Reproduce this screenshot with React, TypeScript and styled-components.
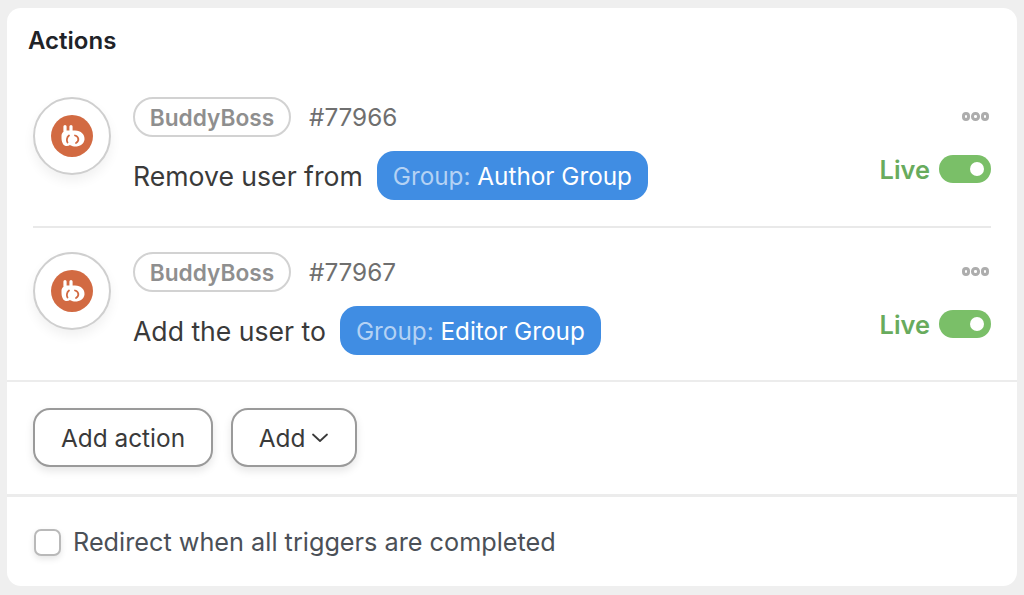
import styled, { createGlobalStyle } from "styled-components";

const GlobalStyle = createGlobalStyle`
  html, body {
    margin: 0;
    padding: 0;
    background: #efefef;
  }
  body {
    font-family: Inter, "Noto Sans", sans-serif;
    -webkit-font-smoothing: antialiased;
  }
`;

const Page = styled.div`
  width: 1024px;
  height: 595px;
  overflow: hidden;
  padding: 8px 7px 9px;
  box-sizing: border-box;
`;

const Card = styled.section`
  background: #fff;
  border-radius: 14px;
  height: 578px;
  overflow: hidden;
  display: flex;
  flex-direction: column;
`;

const Title = styled.h2`
  margin: 0;
  padding: 18px 21px 0;
  height: 72px;
  box-sizing: border-box;
  font-size: 24px;
  line-height: 30px;
  font-weight: 600;
  color: #1f2328;
`;

const ActionList = styled.div`
  padding: 17px 26px 0;
  height: 302px;
  box-sizing: border-box;
  border-bottom: 2px solid #ececec;
`;

const ActionRow = styled.div`
  display: flex;
  height: 129px;
  position: relative;
  &:first-child {
    border-bottom: 2px solid #e9e9e9;
    margin-bottom: 24px;
  }
`;

const IconCircle = styled.div`
  width: 78px;
  height: 78px;
  box-sizing: border-box;
  border-radius: 50%;
  background: #fff;
  border: 2px solid #cfcfcf;
  box-shadow: 0 6px 12px rgba(0, 0, 0, 0.06);
  display: flex;
  align-items: center;
  justify-content: center;
  flex: none;
`;

const ActionBody = styled.div`
  margin-left: 22px;
  flex: 1;
  display: flex;
  flex-direction: column;
`;

const MetaLine = styled.div`
  display: flex;
  align-items: center;
  height: 40px;
`;

const IntegrationPill = styled.span`
  height: 40px;
  width: 158px;
  box-sizing: border-box;
  border: 2px solid #d2d2d2;
  border-radius: 20px;
  display: flex;
  align-items: center;
  justify-content: center;
  font-size: 22.7px;
  font-weight: 600;
  color: #8f8f8f;
`;

const ActionId = styled.span`
  margin-left: 18px;
  font-size: 24.3px;
  color: #6f6f6f;
`;

const Sentence = styled.div`
  display: flex;
  align-items: center;
  margin-top: 14px;
  height: 49px;
  font-size: 26.6px;
  color: #3a3a3a;
`;

const Token = styled.span`
  margin-left: 14px;
  height: 49px;
  padding: 0 16px;
  border-radius: 17px;
  background: #408de3;
  color: #fff;
  display: flex;
  align-items: center;
  font-size: 24.3px;
  white-space: pre;
`;

const TokenLabel = styled.span`
  color: #b4d2f4;
`;

const Side = styled.div`
  position: absolute;
  right: 0;
  top: 0;
  display: flex;
  flex-direction: column;
  align-items: flex-end;
`;

const Dots = styled.div`
  display: flex;
  gap: 1px;
  margin: 15px 2px 33px 0;
`;

const Dot = styled.span`
  width: 8.5px;
  height: 8.5px;
  box-sizing: border-box;
  border: 3px solid #adadad;
  border-radius: 50%;
`;

const LiveLine = styled.div`
  display: flex;
  align-items: center;
  gap: 9px;
`;

const LiveLabel = styled.span`
  font-size: 25.4px;
  font-weight: 600;
  color: #68ab5d;
  line-height: 28px;
  padding-top: 2px;
`;

const Toggle = styled.span`
  width: 52px;
  height: 28px;
  border-radius: 14px;
  background: #7abf68;
  display: flex;
  align-items: center;
  justify-content: flex-end;
  padding-right: 7px;
  box-sizing: border-box;
`;

const Knob = styled.span`
  width: 14px;
  height: 14px;
  border-radius: 50%;
  background: #fff;
`;

const ButtonBar = styled.div`
  display: flex;
  gap: 18px;
  padding: 26px 26px 0;
  height: 115px;
  box-sizing: border-box;
  border-bottom: 3px solid #ececec;
`;

const OutlineButton = styled.button`
  height: 59px;
  width: ${({ $width }: { $width: number }) => $width}px;
  box-sizing: border-box;
  border: 2px solid #9a9a9a;
  border-radius: 17px;
  background: #fff;
  box-shadow: 0 4px 8px rgba(0, 0, 0, 0.1);
  display: flex;
  align-items: center;
  justify-content: center;
  gap: 6px;
  font-family: inherit;
  font-size: 24.4px;
  color: #3a3a3a;
  padding: 0;
`;

const Footer = styled.label`
  display: flex;
  align-items: center;
  gap: 12px;
  padding: 30px 27px 0;
  font-size: 25.25px;
  color: #4b5057;
`;

const CheckBox = styled.span`
  width: 27px;
  height: 27px;
  box-sizing: border-box;
  border: 2px solid #b9b9b9;
  border-radius: 7px;
  background: #fff;
  box-shadow: 0 3px 6px rgba(0, 0, 0, 0.1);
`;

const BuddyBossLogo = () => (
  <svg width="42" height="42" viewBox="0 0 42 42" aria-hidden="true">
    <circle cx="21" cy="21" r="21" fill="#d26a42" />
    <path
      d="M14 11.5V16M20 11.5V16"
      fill="none"
      stroke="#fff"
      strokeWidth="3.2"
      strokeLinecap="round"
    />
    <path
      d="M10.5 21C10.5 17.5 13 15.5 17 15.5H24C30 15.5 34 19.5 33.5 24.5C33 29.5 28 32 23 31.5C21 31.3 20 30.5 19 30C17 31.5 13.5 31.5 12 29C10.5 26.5 10.5 24 10.5 21Z"
      fill="#fff"
    />
    <path
      d="M18 20.5C15.5 22.5 15.5 26 16.5 27.5M24 20.5C28 21.5 28.5 26 25 28"
      fill="none"
      stroke="#d26a42"
      strokeWidth="1.8"
      strokeLinecap="round"
    />
  </svg>
);

const Chevron = () => (
  <svg width="18" height="10" viewBox="0 0 18 10" aria-hidden="true">
    <path d="M2 1.5L9 8L16 1.5" fill="none" stroke="#3a3a3a" strokeWidth="1.8" strokeLinecap="round" strokeLinejoin="round" />
  </svg>
);

const actions = [
  { id: "#77966", text: "Remove user from", group: "Author Group" },
  { id: "#77967", text: "Add the user to", group: "Editor Group" },
];

export default function App() {
  return (
    <Page>
      <GlobalStyle />
      <Card>
        <Title>Actions</Title>
        <ActionList>
          {actions.map((action) => (
            <ActionRow key={action.id}>
              <IconCircle>
                <BuddyBossLogo />
              </IconCircle>
              <ActionBody>
                <MetaLine>
                  <IntegrationPill>BuddyBoss</IntegrationPill>
                  <ActionId>{action.id}</ActionId>
                </MetaLine>
                <Sentence>
                  {action.text}
                  <Token>
                    <TokenLabel>Group: </TokenLabel>
                    {action.group}
                  </Token>
                </Sentence>
              </ActionBody>
              <Side>
                <Dots>
                  <Dot />
                  <Dot />
                  <Dot />
                </Dots>
                <LiveLine>
                  <LiveLabel>Live</LiveLabel>
                  <Toggle>
                    <Knob />
                  </Toggle>
                </LiveLine>
              </Side>
            </ActionRow>
          ))}
        </ActionList>
        <ButtonBar>
          <OutlineButton $width={180}>Add action</OutlineButton>
          <OutlineButton $width={126}>
            Add <Chevron />
          </OutlineButton>
        </ButtonBar>
        <Footer>
          <CheckBox />
          Redirect when all triggers are completed
        </Footer>
      </Card>
    </Page>
  );
}
